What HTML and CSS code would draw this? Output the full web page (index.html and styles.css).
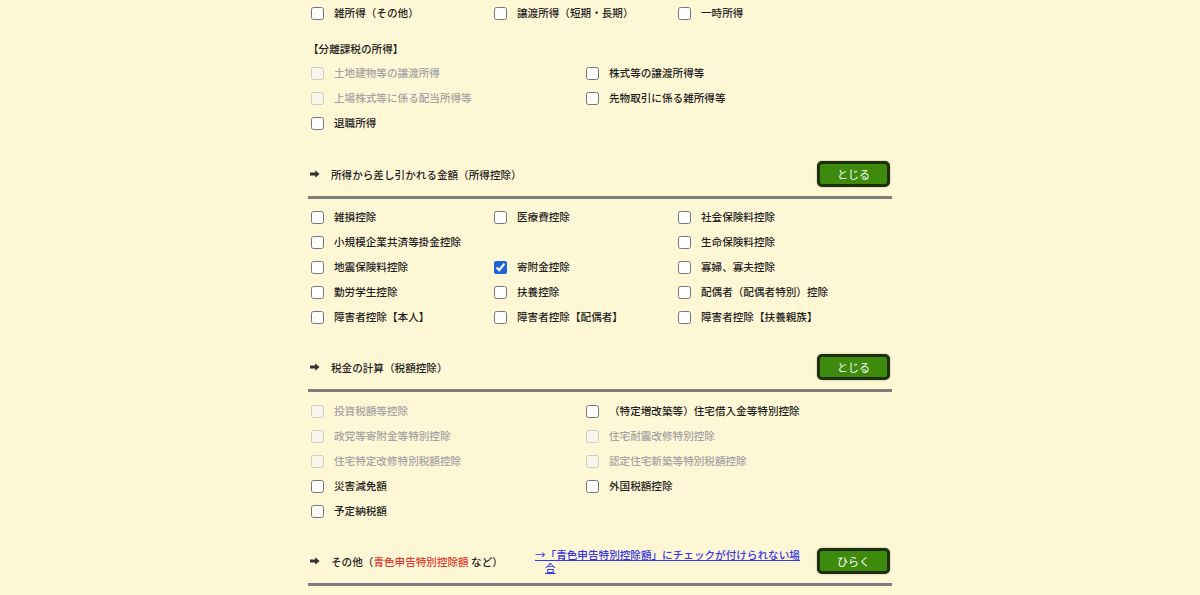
FILE: index.html
```html
<!DOCTYPE html>
<html lang="ja">
<head>
<meta charset="utf-8">
<title>申告書 選択</title>
<link rel="stylesheet" href="styles.css">
</head>
<body>
<div class="page">
  <div class="grid cols3">
    <label class="item"><input type="checkbox"><span>雑所得（その他）</span></label>
    <label class="item"><input type="checkbox"><span>譲渡所得（短期・長期）</span></label>
    <label class="item"><input type="checkbox"><span>一時所得</span></label>
  </div>

  <div class="subhead">【分離課税の所得】</div>
  <div class="grid cols2">
    <label class="item disabled"><input type="checkbox" disabled><span>土地建物等の譲渡所得</span></label>
    <label class="item"><input type="checkbox"><span>株式等の譲渡所得等</span></label>
    <label class="item disabled"><input type="checkbox" disabled><span>上場株式等に係る配当所得等</span></label>
    <label class="item"><input type="checkbox"><span>先物取引に係る雑所得等</span></label>
    <label class="item"><input type="checkbox"><span>退職所得</span></label>
  </div>

  <div class="sec-head sec-first">
    <svg class="arrow" width="10" height="8" viewBox="0 0 10 8"><path d="M0 2.6h5.2V0.3L9.6 4 5.2 7.7V5.4H0z" fill="#333"/></svg>
    <span class="sec-title">所得から差し引かれる金額（所得控除）</span>
    <button class="btn" type="button">とじる</button>
  </div>
  <div class="grid cols3">
    <label class="item"><input type="checkbox"><span>雑損控除</span></label>
    <label class="item"><input type="checkbox"><span>医療費控除</span></label>
    <label class="item"><input type="checkbox"><span>社会保険料控除</span></label>
    <label class="item"><input type="checkbox"><span>小規模企業共済等掛金控除</span></label>
    <span class="empty"></span>
    <label class="item"><input type="checkbox"><span>生命保険料控除</span></label>
    <label class="item"><input type="checkbox"><span>地震保険料控除</span></label>
    <label class="item"><input type="checkbox" checked><span>寄附金控除</span></label>
    <label class="item"><input type="checkbox"><span>寡婦、寡夫控除</span></label>
    <label class="item"><input type="checkbox"><span>勤労学生控除</span></label>
    <label class="item"><input type="checkbox"><span>扶養控除</span></label>
    <label class="item"><input type="checkbox"><span>配偶者（配偶者特別）控除</span></label>
    <label class="item"><input type="checkbox"><span>障害者控除【本人】</span></label>
    <label class="item"><input type="checkbox"><span>障害者控除【配偶者】</span></label>
    <label class="item"><input type="checkbox"><span>障害者控除【扶養親族】</span></label>
  </div>

  <div class="sec-head">
    <svg class="arrow" width="10" height="8" viewBox="0 0 10 8"><path d="M0 2.6h5.2V0.3L9.6 4 5.2 7.7V5.4H0z" fill="#333"/></svg>
    <span class="sec-title">税金の計算（税額控除）</span>
    <button class="btn" type="button">とじる</button>
  </div>
  <div class="grid cols2">
    <label class="item disabled"><input type="checkbox" disabled><span>投資税額等控除</span></label>
    <label class="item"><input type="checkbox"><span>（特定増改築等）住宅借入金等特別控除</span></label>
    <label class="item disabled"><input type="checkbox" disabled><span>政党等寄附金等特別控除</span></label>
    <label class="item disabled"><input type="checkbox" disabled><span>住宅耐震改修特別控除</span></label>
    <label class="item disabled"><input type="checkbox" disabled><span>住宅特定改修特別税額控除</span></label>
    <label class="item disabled"><input type="checkbox" disabled><span>認定住宅新築等特別税額控除</span></label>
    <label class="item"><input type="checkbox"><span>災害減免額</span></label>
    <label class="item"><input type="checkbox"><span>外国税額控除</span></label>
    <label class="item"><input type="checkbox"><span>予定納税額</span></label>
  </div>

  <div class="sec-head">
    <svg class="arrow" width="10" height="8" viewBox="0 0 10 8"><path d="M0 2.6h5.2V0.3L9.6 4 5.2 7.7V5.4H0z" fill="#333"/></svg>
    <span class="sec-title sec-title-fixed">その他（<span class="red">青色申告特別控除額</span> など）</span>
    <a class="note-link" href="#">→「青色申告特別控除額」にチェックが付けられない場合</a>
    <button class="btn" type="button">ひらく</button>
  </div>
</div>
</body>
</html>
```

FILE: styles.css
```css
html, body {
  margin: 0;
  padding: 0;
  background: #fef7d5;
  overflow: hidden;
}

body {
  font-family: "Noto Sans CJK JP", "Noto Sans", sans-serif;
  font-size: 10.6px;
  font-weight: 500;
  color: #1e1e1e;
}

.page {
  width: 584px;
  margin: 0 auto;
  padding-top: 1px;
}

.grid {
  display: grid;
  grid-auto-rows: 25px;
  padding-left: 3px;
}

.cols3 {
  grid-template-columns: 183px 184px 1fr;
}

.cols2 {
  grid-template-columns: 275px 1fr;
}

.item {
  display: flex;
  align-items: center;
  gap: 10px;
  white-space: nowrap;
  line-height: 1;
}

.item input {
  margin: 0;
  width: 13px;
  height: 13px;
  flex: none;
  accent-color: #1f62d8;
}

.item.disabled {
  color: #a3a3a3;
}

.subhead {
  margin-top: 12px;
  height: 22px;
  line-height: 22px;
  margin-bottom: 1px;
}

.sec-head {
  display: flex;
  align-items: center;
  margin-top: 24px;
  height: 26px;
  padding-bottom: 9px;
  border-bottom: 3px solid #7d7d7d;
  margin-bottom: 7px;
}

.sec-head.sec-first {
  margin-top: 25px;
  margin-bottom: 6px;
}

.arrow {
  flex: none;
  margin-left: 2px;
  margin-right: 11px;
}

.sec-title {
  white-space: nowrap;
}

.sec-title-fixed {
  width: 204px;
  flex: none;
}

.red {
  color: #ea3a2e;
}

.note-link {
  width: 272px;
  flex: none;
  color: #3434ec;
  text-decoration: underline;
  line-height: 13px;
  padding-left: 10px;
  text-indent: -10px;
  box-sizing: border-box;
}

.btn {
  margin-left: auto;
  margin-right: 2px;
  width: 73px;
  height: 26px;
  box-sizing: border-box;
  border: 3px solid #1b300b;
  border-radius: 5px;
  background: #3d8a0c;
  color: #fff;
  font-family: "Noto Sans CJK JP", "Noto Sans", sans-serif;
  font-size: 11px;
  font-weight: 400;
  padding: 0;
  box-shadow: 0 0 2px rgba(0, 0, 0, 0.35);
  cursor: pointer;
}
```
